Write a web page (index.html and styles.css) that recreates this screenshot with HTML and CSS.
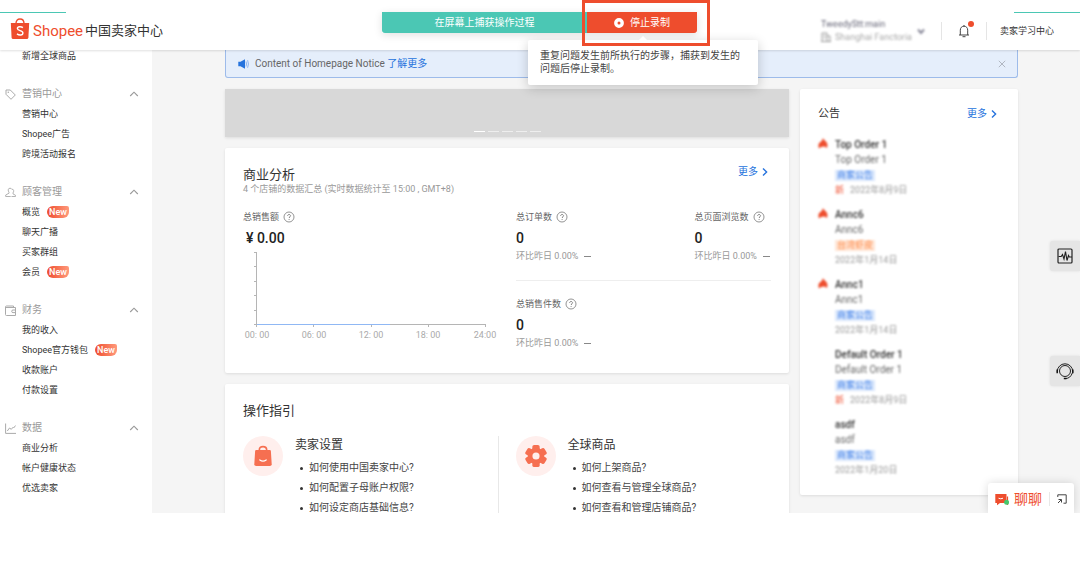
FILE: index.html
```html
<!DOCTYPE html>
<html lang="zh-CN">
<head>
<meta charset="utf-8">
<meta name="viewport" content="width=device-width, initial-scale=1">
<title>Shopee 中国卖家中心</title>
<link rel="stylesheet" href="styles.css">
</head>
<body>
<svg class="defs" aria-hidden="true">
  <symbol id="chev-up" viewBox="0 0 10 10"><path d="M1.2 7 5 3.2 8.8 7" fill="none" stroke="#999" stroke-width="1.1"/></symbol>
  <symbol id="chev-right" viewBox="0 0 8 10"><path d="M2 1.5 5.6 5 2 8.5" fill="none" stroke="#2673dd" stroke-width="1.4"/></symbol>
  <symbol id="help" viewBox="0 0 12 12"><circle cx="6" cy="6" r="5" fill="none" stroke="#888" stroke-width=".9"/><path d="M4.6 4.9c0-1.9 2.9-1.9 2.9-.1 0 1-1.4 1.1-1.4 2.2M6.1 8v.9" fill="none" stroke="#777" stroke-width=".9"/></symbol>
  <symbol id="flame" viewBox="0 0 10 11"><path d="M5 0c.5 2 4.500 3.500 4.500 7L9 10 6.500 8.500 3 9 1 10.500C-.2 7.500.5 5 2.500 4 3.500 3 4.500 2 5 0z" fill="#ee4d2d"/></symbol>
</svg>
<div class="app">
  <header class="header">
    <a class="brand" href="#">
      <svg class="brand-bag" viewBox="0 0 20 22"><path d="M6 5.500C6 2.500 7.500 1 10 1s4 1.500 4 4.500" fill="none" stroke="#ee4d2d" stroke-width="1.400"/><path d="M.8 5h18.400l-.8 14.500q-.1 1.500-1.600 1.500H3.200q-1.500 0-1.600-1.500z" fill="#ee4d2d"/><path d="M12.900 9.600C11.500 8.500 7.400 8 7.400 10.600c0 2.500 5.500 1.600 5.500 4.400 0 2.600-3.900 2.500-5.900.9" fill="none" stroke="#fff" stroke-width="1.400"/></svg>
      <span class="brand-name">Shopee</span>
      <span class="brand-title">中国卖家中心</span>
    </a>
    <div class="account">
      <div class="account-lines">
        <span class="account-name">TweedyStt:main</span>
        <span class="account-shop"><svg viewBox="0 0 10 10"><path d="M1 9.500V1h5v8.500M6 4h3v5.500M0 9.500h10M2.500 3.500h2M2.500 6h2" fill="none" stroke="#999"/></svg>Shanghai Fanctoria</span>
      </div>
      <svg class="account-caret" viewBox="0 0 8 8"><path d="M1 2.500 4 6l3-3.500" fill="none" stroke="#889" stroke-width="2"/></svg>
    </div>
    <button class="bell" type="button" aria-label="通知">
      <svg viewBox="0 0 12 14"><path d="M1 11h10M2.300 11V6.200C2.300 3.800 3.800 2.200 6 2.200s3.700 1.600 3.700 4V11M6 2.200V1M4.500 12.700h3" fill="none" stroke="#444"/></svg>
      <i class="bell-dot"></i>
    </button>
    <a class="learn" href="#">卖家学习中心</a>
    <i class="edge edge-left"></i>
    <i class="edge edge-right"></i>
    <div class="recorder">
      <span class="recorder-label">在屏幕上捕获操作过程</span>
      <div class="recorder-stop">
        <button class="stop" type="button"><svg viewBox="0 0 10 10"><circle cx="5" cy="5" r="3.200" fill="none" stroke="#fff" stroke-width="3.400"/></svg>停止录制</button>
        <div class="tip" role="tooltip">重复问题发生前所执行的步骤，捕获到发生的问题后停止录制。</div>
        <i class="focus-frame"></i>
      </div>
    </div>
  </header>

  <div class="body">
    <nav class="sidebar">
      <div class="group">
        <a class="item" href="#">新增全球商品</a>
      </div>
      <div class="group">
        <button class="group-head" type="button"><svg class="group-icon" viewBox="0 0 11 11"><path d="M1 1h4.300l5 5-4.300 4.300-5-5z" fill="none" stroke="#aaa"/><circle cx="3.300" cy="3.300" r=".8" fill="#aaa"/></svg>营销中心<svg class="group-chev"><use href="#chev-up"/></svg></button>
        <a class="item" href="#">营销中心</a>
        <a class="item" href="#">Shopee广告</a>
        <a class="item" href="#">跨境活动报名</a>
      </div>
      <div class="group">
        <button class="group-head" type="button"><svg class="group-icon" viewBox="0 0 11 11"><path d="M5 1.200C2.800 1.200 2.800 4 4 5.200v1L.7 8v1.500h5M5 1.200c1 0 1.600.5 1.800 1.200M7 2.200c2.200 0 2 2.600 1 3.700v1l2.500 1.400v1.200H6.500" fill="none" stroke="#aaa" stroke-width=".9"/></svg>顾客管理<svg class="group-chev"><use href="#chev-up"/></svg></button>
        <a class="item" href="#">概览<span class="new">New</span></a>
        <a class="item" href="#">聊天广播</a>
        <a class="item" href="#">买家群组</a>
        <a class="item" href="#">会员<span class="new">New</span></a>
      </div>
      <div class="group">
        <button class="group-head" type="button"><svg class="group-icon" viewBox="0 0 11 11"><path d="M8.500 2.500V1H1.500q-1 0-1 1v7.500q0 1 1 1H10.500v-8H1M10.500 5H8a1.300 1.300 0 0 0 0 2.600h2.500" fill="none" stroke="#aaa"/></svg>财务<svg class="group-chev"><use href="#chev-up"/></svg></button>
        <a class="item" href="#">我的收入</a>
        <a class="item" href="#">Shopee官方钱包<span class="new">New</span></a>
        <a class="item" href="#">收款账户</a>
        <a class="item" href="#">付款设置</a>
      </div>
      <div class="group">
        <button class="group-head" type="button"><svg class="group-icon" viewBox="0 0 11 11"><path d="M.6.500v9.900H11M2.300 8l2.200-3 1.800 1.300 1.700-2L8.600 5l2-2.500" fill="none" stroke="#aaa"/></svg>数据<svg class="group-chev"><use href="#chev-up"/></svg></button>
        <a class="item" href="#">商业分析</a>
        <a class="item" href="#">帐户健康状态</a>
        <a class="item" href="#">优选卖家</a>
      </div>
    </nav>

    <main class="main">
      <div class="notice">
        <svg class="notice-icon" viewBox="0 0 11 10"><path d="M.3 2.800h2.200L7 .3v9.400L2.500 7.200H.3z" fill="#2673dd"/><path d="M8 2.500q1 2.500 0 5M9.600 1.200q1.700 3.800 0 7.600" fill="none" stroke="#8fb4ee"/></svg>
        <span>Content of Homepage Notice <a class="link" href="#">了解更多</a></span>
        <button class="notice-close" type="button" aria-label="关闭"><svg viewBox="0 0 8 8"><path d="M.8.8l6.400 6.400M7.200.8.8 7.200" stroke="#aab0ba" fill="none" stroke-width=".9"/></svg></button>
      </div>

      <div class="columns">
        <div class="left">
          <div class="banner"><i class="bar bar-on"></i><i class="bar"></i><i class="bar"></i><i class="bar"></i><i class="bar"></i></div>

          <section class="card">
            <div class="card-head">
              <h2 class="card-title">商业分析</h2>
              <a class="more" href="#">更多<svg><use href="#chev-right"/></svg></a>
            </div>
            <p class="sub">4 个店铺的数据汇总 (实时数据统计至 15:00 , GMT+8)</p>
            <div class="analytics">
              <div class="sales">
                <div class="label">总销售额<svg><use href="#help"/></svg></div>
                <div class="value value-money">¥ 0.00</div>
                <svg class="chart" viewBox="0 0 255 92">
                  <path d="M13.500 3v73M11 3.500h3M11 17.500h3M11 32.500h3M11 46.500h3M11 61.500h3M11 75.500h232M13.500 75v3M70.500 75v3M128.500 75v3M185.500 75v3M242.500 75v3" stroke="#b5b5b5" fill="none"/>
                  <path d="M14 75.500h133" stroke="#90b8f4"/>
                  <g class="ticks"><text x="14" y="89">00: 00</text><text x="71" y="89">06: 00</text><text x="128" y="89">12: 00</text><text x="185" y="89">18: 00</text><text x="242" y="89">24:00</text></g>
                </svg>
              </div>
              <div class="stats">
                <div class="stat-row">
                  <div class="stat"><div class="label">总订单数<svg><use href="#help"/></svg></div><div class="value">0</div><div class="compare">环比昨日 0.00%<i class="dash"></i></div></div>
                  <div class="stat"><div class="label">总页面浏览数<svg><use href="#help"/></svg></div><div class="value">0</div><div class="compare">环比昨日 0.00%<i class="dash"></i></div></div>
                </div>
                <div class="stat-row">
                  <div class="stat"><div class="label">总销售件数<svg><use href="#help"/></svg></div><div class="value">0</div><div class="compare">环比昨日 0.00%<i class="dash"></i></div></div>
                </div>
              </div>
            </div>
          </section>

          <section class="card">
            <h2 class="card-title">操作指引</h2>
            <div class="guides">
              <div class="guide">
                <span class="guide-icon"><svg viewBox="0 0 24 24"><path d="M8 7V5.500C8 3 9.500 1.800 12 1.800S16 3 16 5.500V7" fill="none" stroke="#f66f51" stroke-width="1.800"/><path d="M4.500 5.500h15q1 0 1.100 1L21.500 21q0 2-2 2h-15q-2 0-2-2L3.400 6.500q.1-1 1.100-1z" fill="#f66f51"/><path d="M8.500 16.300q3.500 2.400 7 0" fill="none" stroke="#fff" stroke-width="1.300" stroke-linecap="round"/></svg></span>
                <div>
                  <h3 class="guide-title">卖家设置</h3>
                  <ul class="guide-list"><li><a href="#">如何使用中国卖家中心?</a></li><li><a href="#">如何配置子母账户权限?</a></li><li><a href="#">如何设定商店基础信息?</a></li></ul>
                </div>
              </div>
              <div class="guide">
                <span class="guide-icon"><svg viewBox="0 0 24 24"><g fill="#f66f51"><circle cx="12" cy="12" r="9"/><rect x="8" y="0" width="8" height="24" rx="2"/><rect x="8" y="0" width="8" height="24" rx="2" transform="rotate(60 12 12)"/><rect x="8" y="0" width="8" height="24" rx="2" transform="rotate(120 12 12)"/></g><circle cx="12" cy="12" r="3.900" fill="#ffefed"/></svg></span>
                <div>
                  <h3 class="guide-title">全球商品</h3>
                  <ul class="guide-list"><li><a href="#">如何上架商品?</a></li><li><a href="#">如何查看与管理全球商品?</a></li><li><a href="#">如何查看和管理店铺商品?</a></li></ul>
                </div>
              </div>
            </div>
          </section>
        </div>

        <aside class="card news">
          <div class="card-head news-head">
            <h2 class="news-title">公告</h2>
            <a class="more" href="#">更多<svg><use href="#chev-right"/></svg></a>
          </div>
          <ul class="news-list">
            <li class="news-item"><svg class="hot"><use href="#flame"/></svg><strong>Top Order 1</strong><span class="news-sub">Top Order 1</span><span class="tag">商家公告</span><span class="date"><em>新</em>2022年8月9日</span></li>
            <li class="news-item"><svg class="hot"><use href="#flame"/></svg><strong>Annc6</strong><span class="news-sub">Annc6</span><span class="tag tag-orange">台湾虾皮</span><span class="date">2022年1月14日</span></li>
            <li class="news-item"><svg class="hot"><use href="#flame"/></svg><strong>Annc1</strong><span class="news-sub">Annc1</span><span class="tag">商家公告</span><span class="date">2022年1月14日</span></li>
            <li class="news-item"><strong>Default Order 1</strong><span class="news-sub">Default Order 1</span><span class="tag">商家公告</span><span class="date"><em>新</em>2022年8月9日</span></li>
            <li class="news-item"><strong>asdf</strong><span class="news-sub">asdf</span><span class="tag">商家公告</span><span class="date">2022年1月20日</span></li>
          </ul>
        </aside>
      </div>
    </main>
  </div>

  <div class="float-tools">
    <button class="tool" type="button" aria-label="诊断"><svg viewBox="0 0 18 18"><rect x="2" y="2" width="14" height="14" rx="1" fill="none" stroke="#222" stroke-width="1.200"/><path d="M2.500 9.500h2.700l1.300-2 1.500 4.500L9.500 4.500l1.500 9 1.500-5 .8 1.500H16" fill="none" stroke="#222" stroke-width="1.100"/></svg></button>
    <button class="tool" type="button" aria-label="客服"><svg viewBox="0 0 18 18"><circle cx="9" cy="9" r="5.500" fill="none" stroke="#222"/><path d="M1.300 9.500A7.700 7.700 0 0 1 16.700 9.500M16.300 11Q14.500 16.300 9.500 16.600" fill="none" stroke="#222"/><path d="M1.200 7.500v3.800M16.800 7.500v3.800M7.800 16.500h2.700" stroke="#111" stroke-width="1.500"/></svg></button>
  </div>
  <div class="chat">
    <button class="chat-open" type="button"><svg viewBox="0 0 14 13"><path d="M.3 1h11.200v9H5l-3 2.200V10H.3z" fill="#ee4d2d"/><path d="M12.500 3.500v8.500" stroke="#ee4d2d" stroke-width="1.200"/><path d="M3.500 5.200q2.300 1.200 4.500 0" stroke="#fff" fill="none"/><circle cx="11.600" cy="9.300" r="2.500" fill="#45c76c"/></svg>聊聊</button>
    <button class="chat-expand" type="button" aria-label="展开"><svg viewBox="0 0 10 10"><path d="M.8 3V.8h8.400v8.400H6.500M1 9l3.200-3.200M1.500 5.500h3v3" fill="none" stroke="#444"/></svg></button>
  </div>
</div>
</body>
</html>
```

FILE: styles.css
```css
* { box-sizing: border-box; }

body {
  margin: 0;
  height: 100vh;
  padding-bottom: 75px;
  background: #fff;
  color: #444;
  font: 10px/20px Roboto, "Noto Sans CJK SC", sans-serif;
}

h2, h3, p, ul { margin: 0; padding: 0; font-weight: 400; }
ul { list-style: none; }
a { color: inherit; text-decoration: none; }
button { padding: 0; border: 0; background: none; color: inherit; font: inherit; cursor: pointer; }
svg { display: block; flex: none; }
.defs { position: absolute; width: 0; height: 0; }

.app {
  position: relative;
  display: flex;
  flex-direction: column;
  height: 100%;
  overflow: hidden;
  background: #f5f5f5;
}

/* Header */
.header {
  position: relative;
  z-index: 2;
  display: flex;
  align-items: center;
  flex: none;
  height: 50px;
  padding: 11px 26px 0 10px;
  background: #fff;
  box-shadow: 0 1px 2px rgba(0, 0, 0, .12);
}
.brand { display: flex; align-items: center; margin-right: auto; }
.brand-bag { width: 20px; height: 22px; margin-bottom: 4px; }
.brand-name { margin: 0 2px 0 3px; color: #ee4d2d; font-size: 15px; }
.brand-title { color: #333; font-size: 13px; }

.account {
  display: flex;
  align-items: center;
  gap: 5px;
  margin-right: 16px;
  filter: blur(1px);
}
.account-lines { display: flex; flex-direction: column; width: 91px; font-size: 9px; line-height: 13px; white-space: nowrap; }
.account-name { color: #667; }
.account-shop { display: flex; align-items: center; gap: 4px; color: #aaa; }
.account-shop svg { width: 10px; height: 10px; }
.account-caret { width: 8px; height: 8px; }

.bell {
  position: relative;
  padding: 2px 16px;
  border: solid #e5e5e5;
  border-width: 0 1px;
}
.bell svg { width: 12px; height: 14px; }
.bell-dot { position: absolute; top: -1px; right: 12px; width: 6px; height: 6px; border-radius: 50%; background: #ee4d2d; }
.learn { margin-left: 13px; color: #333; font-size: 9px; }

.edge { position: absolute; top: 12px; width: 66px; height: 1px; background: #4bc7b4; }
.edge-left { left: 0; }
.edge-right { right: 0; }

.recorder {
  position: absolute;
  top: 12px;
  left: 50%;
  display: flex;
  width: 315px;
  height: 21px;
  margin-left: -158px;
  line-height: 21px;
  color: #fff;
  box-shadow: 0 2px 8px rgba(0, 0, 0, .12);
}
.recorder-label { flex: 1; border-radius: 0 0 0 3px; background: #4bc7b4; text-align: center; }
.recorder-stop { position: relative; width: 110px; }
.stop {
  display: flex;
  align-items: center;
  justify-content: center;
  gap: 6px;
  width: 100%;
  height: 100%;
  border-radius: 0 0 3px 0;
  background: #ee4d2d;
}
.stop svg { width: 10px; height: 10px; }
.tip {
  position: absolute;
  top: 28px;
  left: -59px;
  width: 230px;
  padding: 9px 12px 10px;
  border-radius: 2px;
  background: #fff;
  color: #444;
  line-height: 13px;
  box-shadow: 0 3px 12px rgba(0, 0, 0, .2);
}
.tip::before {
  content: "";
  position: absolute;
  top: -4px;
  left: 50%;
  margin-left: -4px;
  border: solid transparent;
  border-width: 0 4px 4px;
  border-bottom-color: #fff;
}
.focus-frame { position: absolute; top: -12px; left: -5px; width: 128px; height: 46px; border: 3px solid #ee4d2d; pointer-events: none; }

.body { display: flex; flex: 1; min-height: 0; }

/* Sidebar */
.sidebar {
  display: flex;
  flex-direction: column;
  flex: none;
  gap: 18px;
  width: 152px;
  margin-top: -4px;
  background: #fff;
}
.group { display: flex; flex-direction: column; }
.group-head { display: flex; align-items: center; height: 20px; padding: 0 13px 0 5px; color: #999; }
.group-icon { width: 11px; height: 11px; margin-right: 6px; }
.group-chev { width: 10px; height: 10px; margin-left: auto; }
.item { display: flex; align-items: center; height: 20px; padding-left: 22px; color: #333; font-size: 9px; }
.new {
  margin-left: 7px;
  padding: 0 2px;
  border-radius: 6px 2px 6px 6px;
  background: linear-gradient(90deg, #ee4d2d, #ff9a7c);
  color: #fff;
  font-weight: 500;
  line-height: 12px;
}

/* Main */
.main { flex: 1; min-width: 0; padding: 0 62px 0 73px; }
.notice {
  display: flex;
  align-items: center;
  gap: 6px;
  height: 28px;
  margin-bottom: 11px;
  padding: 0 11px 0 12px;
  border: solid #9dbbea;
  border-width: 0 1px 1px;
  border-radius: 0 0 3px 3px;
  background: #e5eefb;
  color: #666;
}
.notice-icon { width: 11px; height: 10px; }
.notice-close { margin-left: auto; }
.notice-close svg { width: 8px; height: 8px; }
.link, .more { color: #2673dd; }

.columns { display: grid; grid-template-columns: minmax(0, 1fr) 218px; align-items: start; gap: 11px; }
.left { display: flex; flex-direction: column; gap: 11px; }
.banner {
  display: flex;
  align-items: flex-end;
  justify-content: center;
  gap: 3px;
  height: 48px;
  padding-bottom: 5px;
  background: #d8d8d8;
  box-shadow: 0 1px 3px rgba(0, 0, 0, .1);
}
.bar { width: 11px; height: 1px; background: #eee; }
.bar-on { background: #fff; }

.card { padding: 18px 18px 23px; border-radius: 2px; background: #fff; box-shadow: 0 1px 3px rgba(0, 0, 0, .1); }
.card-head { display: flex; justify-content: space-between; padding-right: 2px; }
.card-title { color: #333; font-size: 13px; line-height: 17px; }
.more { display: flex; align-items: center; gap: 3px; line-height: 12px; height: 12px; }
.more svg { width: 8px; height: 10px; }
.sub { margin-bottom: 12px; color: #999; font-size: 9px; line-height: 12px; }

.analytics { display: flex; }
.sales { width: 273px; }
.chart { width: 255px; height: 92px; }
.ticks { fill: #aaa; font-size: 9px; text-anchor: middle; }
.stats { flex: 1; }
.stat-row { display: grid; grid-template-columns: 7fr 3fr; }
.stat-row + .stat-row { margin-top: 17px; padding-top: 13px; border-top: 1px solid #eee; }
.stat { white-space: nowrap; }
.label { display: flex; align-items: center; gap: 4px; height: 20px; color: #666; font-size: 9px; }
.label svg { width: 12px; height: 12px; }
.value { height: 22px; color: #222; font-size: 14px; font-weight: 500; line-height: 22px; }
.value-money { padding-left: 3px; }
.compare { display: flex; align-items: center; gap: 6px; height: 14px; color: #999; font-size: 9px; }
.dash { width: 7px; height: 1px; background: #888; }

.guides { display: grid; grid-template-columns: 1fr 1fr; gap: 17px; margin-top: 17px; }
.guide { display: flex; gap: 12px; }
.guide:first-child { border-right: 1px solid #e8e8e8; }
.guide-icon { display: flex; align-items: center; justify-content: center; flex: none; width: 40px; height: 40px; border-radius: 50%; background: #ffefed; }
.guide-icon svg { width: 22px; height: 22px; }
.guide-title { margin-bottom: 4px; color: #333; font-size: 12px; line-height: 18px; }
.guide-list li { display: flex; align-items: center; gap: 6px; height: 20px; padding-left: 5px; }
.guide-list li::before { content: ""; width: 3px; height: 3px; border-radius: 50%; background: #333; }

/* Announcements */
.news { padding-bottom: 18px; }
.news-head { align-items: center; margin-bottom: 17px; }
.news-title { color: #333; font-size: 11px; line-height: 13px; }
.news-list { display: flex; flex-direction: column; gap: 10px; }
.news-item {
  position: relative;
  display: flex;
  flex-direction: column;
  align-items: flex-start;
  padding-left: 17px;
  color: #333;
  line-height: 15px;
  filter: blur(1px);
}
.news-item strong { font-weight: 500; }
.hot { position: absolute; top: 1px; left: 0; width: 10px; height: 11px; }
.news-sub { color: #666; }
.tag { margin: 3px 0; padding: 0 2px; background: #dbe8fc; color: #4080e8; font-size: 9px; line-height: 11px; }
.tag-orange { background: #ffe6d6; color: #ff8a48; }
.date { color: #999; font-size: 9px; line-height: 13px; }
.date em { margin-right: 6px; color: #ee4d2d; font-style: normal; }

/* Floating controls */
.float-tools { position: absolute; top: 241px; right: 0; display: flex; flex-direction: column; gap: 85px; }
.tool { display: flex; align-items: center; justify-content: center; width: 30px; height: 30px; border-radius: 3px 0 0 3px; background: #e5e5e5; box-shadow: 0 0 3px rgba(0, 0, 0, .1); }
.tool svg { width: 18px; height: 18px; }
.chat {
  position: absolute;
  right: 6px;
  bottom: 0;
  display: flex;
  align-items: center;
  height: 30px;
  padding: 2px 7px 0;
  border-radius: 3px 3px 0 0;
  background: #fff;
  box-shadow: 0 0 10px rgba(0, 0, 0, .15);
}
.chat-open { display: flex; align-items: center; gap: 5px; padding-right: 7px; border-right: 1px solid #e8e8e8; color: #ee4d2d; font-size: 14px; line-height: 14px; }
.chat-open svg { width: 14px; height: 13px; }
.chat-expand { padding-left: 7px; }
.chat-expand svg { width: 10px; height: 10px; }
```
